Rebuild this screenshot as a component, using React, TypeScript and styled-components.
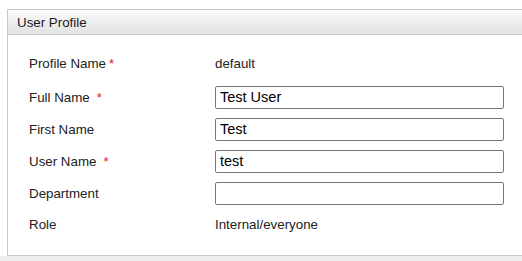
import React from "react";
import styled, { createGlobalStyle } from "styled-components";

const Global = createGlobalStyle`
  html, body { margin: 0; padding: 0; background: #ffffff; }
  body { font-family: "Liberation Sans", Arial, sans-serif; overflow: hidden; }
  #root { width: 522px; height: 261px; overflow: hidden; }
`;

const Page = styled.div`
  width: 522px;
  height: 261px;
  padding-top: 9px;
  box-sizing: border-box;
  display: flex;
  flex-direction: column;
  overflow: hidden;
`;

const Panel = styled.section`
  margin-left: 7px;
  width: 540px;
  flex: none;
  border: 1px solid #c9c9c9;
  border-right: none;
  background: #ffffff;
`;

const Header = styled.header`
  height: 24px;
  display: flex;
  align-items: center;
  padding-left: 9px;
  background: linear-gradient(#fbfbfb, #e2e2e2);
  border-bottom: 1px solid #cbcbcb;
  font-size: 13.33px;
  color: #1a1a1a;
`;

const Body = styled.div`
  height: 220px;
  box-sizing: border-box;
  padding: 12px 0 16px 21px;
  display: flex;
  flex-direction: column;
`;

const Row = styled.div<{ $h: number; $mt?: number }>`
  display: grid;
  grid-template-columns: 186px 289px;
  align-items: center;
  height: ${(p) => p.$h}px;
  margin-top: ${(p) => p.$mt ?? 0}px;
  font-size: 13.33px;
  color: #222222;
`;

const Label = styled.div`
  white-space: pre;
`;

const Star = styled.span<{ $gap: number }>`
  color: #e8141c;
  margin-left: ${(p) => p.$gap}px;
  font-size: 13px;
`;

const Value = styled.div`
  color: #222222;
`;

const Input = styled.input`
  box-sizing: border-box;
  width: 289px;
  height: 23px;
  margin: 0;
  padding: 0 4px;
  border: 1px solid #767676;
  border-radius: 2px;
  font-family: "Liberation Sans", Arial, sans-serif;
  font-size: 14.5px;
  color: #000000;
  background: #ffffff;
  outline: none;
`;

const Footer = styled.div`
  flex: 1;
  background: #efefef;
`;

export default function App() {
  return (
    <>
      <Global />
      <Page>
        <Panel>
          <Header>User Profile</Header>
          <Body>
            <Row $h={32}>
              <Label>
                Profile Name<Star $gap={3}>*</Star>
              </Label>
              <Value>default</Value>
            </Row>
            <Row $h={32} $mt={2}>
              <Label>
                Full Name<Star $gap={7}>*</Star>
              </Label>
              <Input defaultValue="Test User" />
            </Row>
            <Row $h={32}>
              <Label>First Name</Label>
              <Input defaultValue="Test" />
            </Row>
            <Row $h={32}>
              <Label>
                User Name<Star $gap={7}>*</Star>
              </Label>
              <Input defaultValue="test" />
            </Row>
            <Row $h={32}>
              <Label>Department</Label>
              <Input defaultValue="" />
            </Row>
            <Row $h={30}>
              <Label>Role</Label>
              <Value>Internal/everyone</Value>
            </Row>
          </Body>
        </Panel>
        <Footer />
      </Page>
    </>
  );
}
